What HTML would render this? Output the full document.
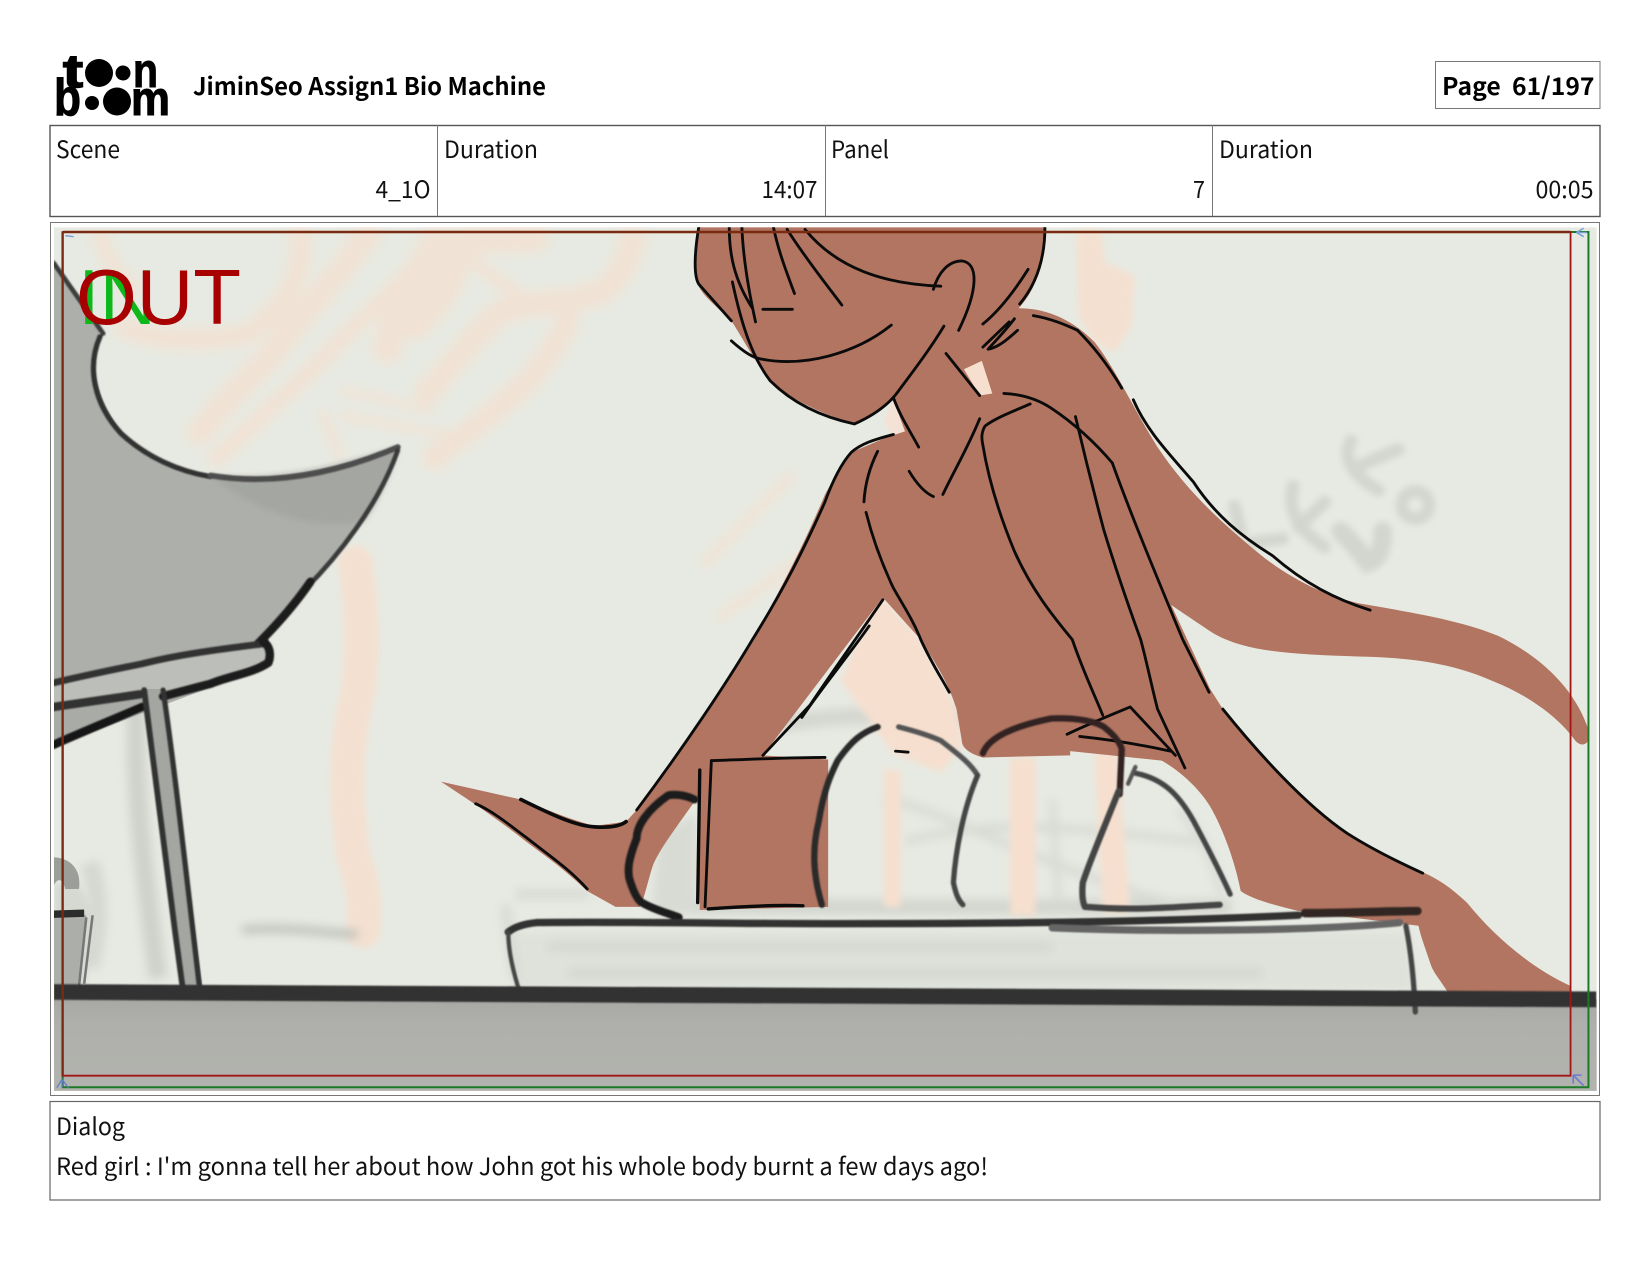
<!DOCTYPE html>
<html><head><meta charset="utf-8"><title>Storyboard page</title>
<style>
html,body{margin:0;padding:0;background:#fff;width:1650px;height:1275px;overflow:hidden}
svg{display:block}
.t{font-family:"Noto Sans CJK JP","Liberation Sans",sans-serif;font-size:24px;fill:#111}
.b{font-weight:700;fill:#000}
.k{fill:none;stroke:#0b0b0b;stroke-width:2.7;stroke-linecap:round;stroke-linejoin:round}
.d{fill:none;stroke-linecap:round;stroke-linejoin:round}
.p{fill:none;stroke:#f6dfcf;stroke-linecap:round;stroke-linejoin:round}
</style></head><body>
<svg width="1650" height="1275" viewBox="0 0 1650 1275" xmlns="http://www.w3.org/2000/svg">
<defs>
<clipPath id="c"><rect x="51.3" y="216" width="1466" height="821"/></clipPath>
<filter id="bl" x="-20%" y="-20%" width="140%" height="140%"><feGaussianBlur stdDeviation="3"/></filter>
<filter id="bl4" x="-20%" y="-20%" width="140%" height="140%"><feGaussianBlur stdDeviation="4.5"/></filter>
<filter id="bl1" x="-10%" y="-10%" width="120%" height="120%"><feGaussianBlur stdDeviation="0.8"/></filter>
<filter id="blf" filterUnits="userSpaceOnUse" x="0" y="900" width="1600" height="100"><feGaussianBlur stdDeviation="0.7"/></filter>
<linearGradient id="fl" x1="0" y1="0" x2="0" y2="1"><stop offset="0" stop-color="#a8a9a5"/><stop offset=".3" stop-color="#afb0ab"/><stop offset="1" stop-color="#b2b3ae"/></linearGradient>
</defs>

<!-- logo -->
<g fill="#000" font-family="'Liberation Sans',sans-serif" font-weight="700">
<text x="63" y="87" font-size="46" textLength="20" lengthAdjust="spacingAndGlyphs" stroke="#000" stroke-width="1.5">t</text>
<circle cx="99" cy="73" r="14"/><circle cx="123" cy="73" r="7.5"/>
<text x="133" y="87" font-size="48" textLength="25" lengthAdjust="spacingAndGlyphs" stroke="#000" stroke-width="1">n</text>
<text x="54" y="115" font-size="52" textLength="27" lengthAdjust="spacingAndGlyphs" stroke="#000" stroke-width="1">b</text>
<circle cx="92" cy="103" r="7"/><circle cx="117" cy="101.5" r="14"/>
<text x="131" y="115" font-size="48" textLength="39" lengthAdjust="spacingAndGlyphs" stroke="#000" stroke-width="1">m</text>
</g>

<text class="t b" x="193" y="95" textLength="353" lengthAdjust="spacingAndGlyphs">JiminSeo Assign1 Bio Machine</text>
<rect x="1435.5" y="61.5" width="164.5" height="47" fill="#fff" stroke="#777" stroke-width="1"/>
<text class="t b" x="1442" y="95" textLength="152.5" lengthAdjust="spacingAndGlyphs" xml:space="preserve">Page&#160;&#160;61/197</text>

<!-- info table -->
<rect x="50" y="125.5" width="1550" height="91" fill="#fff" stroke="#555" stroke-width="1.4"/>
<path d="M437.5 125v91M825.5 125v91M1212.5 125v91" stroke="#777" stroke-width="1" fill="none"/>
<text class="t" x="56" y="158" textLength="64" lengthAdjust="spacingAndGlyphs">Scene</text>
<text class="t" x="375.5" y="198" textLength="55" lengthAdjust="spacingAndGlyphs">4_1O</text>
<text class="t" x="444" y="158" textLength="94" lengthAdjust="spacingAndGlyphs">Duration</text>
<text class="t" x="761.5" y="198" textLength="56" lengthAdjust="spacingAndGlyphs">14:07</text>
<text class="t" x="831" y="158" textLength="58" lengthAdjust="spacingAndGlyphs">Panel</text>
<text class="t" x="1193" y="198" textLength="12" lengthAdjust="spacingAndGlyphs">7</text>
<text class="t" x="1219" y="158" textLength="94" lengthAdjust="spacingAndGlyphs">Duration</text>
<text class="t" x="1535.5" y="198" textLength="58" lengthAdjust="spacingAndGlyphs">00:05</text>

<!-- frame -->
<rect x="50.5" y="222.5" width="1549" height="873" fill="#fff" stroke="#777" stroke-width="1"/>

<g transform="scale(1.0523 1.052)">
<g clip-path="url(#c)">
<rect x="51" y="216" width="1467" height="822" fill="#e7eae2"/>

<!-- peach under-sketch -->
<g filter="url(#bl4)" opacity=".62">
<g class="p">
<path stroke-width="26" d="M190 411C210 385 235 360 260 335C285 300 320 265 349 223"/>
<path stroke-width="18" d="M206 435C240 405 270 375 301 347C330 315 360 290 387 261C398 248 405 235 412 223"/>
<path stroke-width="30" d="M368 331C372 310 378 295 387 278C400 255 415 243 431 233C455 226 480 226 507 226"/>
<path stroke-width="26" d="M406 373C430 345 450 320 475 297C505 285 540 290 570 278C590 265 597 245 602 226"/>
<path stroke-width="24" d="M412 435C445 410 480 385 507 356C520 340 530 325 539 306"/>
<path stroke-width="8" d="M326 371L409 390M326 395L425 413"/>
<path stroke-width="10" d="M307 394L323 432"/>
<path stroke-width="22" d="M120 312C150 325 210 325 238 316C265 295 290 270 285 223"/>
<path stroke-width="16" d="M95 225C102 245 112 262 125 272"/>
<path stroke-width="14" d="M505 290C470 260 440 250 430 225"/>
<path stroke-width="28" d="M435 240C430 270 420 285 395 310"/>
<path stroke-width="10" d="M670 535L750 454M685 586L784 516"/>
</g>
</g>
<g filter="url(#bl)" opacity=".9">
<path class="p" stroke-width="32" d="M338 535C345 590 345 620 340 660C325 720 330 770 335 810C345 840 348 860 345 885"/>
<polygon fill="#f6dfcf" points="1023,218 1045,218 1050,250 1078,262 1075,310 1060,335 1040,325 1025,300"/>
</g>

<!-- table and background greys -->
<g filter="url(#bl4)">
<polygon fill="#dfe2db" points="490,885 1340,885 1345,942 490,942"/>
<path d="M520 900H1000M540 925H1200" stroke="#d4d7d0" stroke-width="9" fill="none"/>
<path d="M620 862H1170" stroke="#d2d5ce" stroke-width="14" fill="none"/>
<polygon fill="#d8dbd4" points="625,790 662,775 662,868 620,868"/>
<path d="M700 700C760 675 900 675 1010 690" stroke="#d4d7d0" stroke-width="16" fill="none"/>
<path d="M490 850L560 850M480 860L490 930" stroke="#d8dbd4" stroke-width="10" fill="none"/>
<path d="M840 760C900 770 1000 830 1120 860M860 800C950 775 1040 790 1140 800" stroke="#d8dbd4" stroke-width="8" fill="none"/>
<path d="M1000 760L1006 860M1120 770C1140 790 1155 820 1160 850" stroke="#d8dbd4" stroke-width="7" fill="none"/>
<path d="M230 884C280 880 310 888 340 888" stroke="#bfc2bb" stroke-width="8" fill="none"/>
<path d="M130 660C125 750 140 850 150 930" stroke="#cfd2cb" stroke-width="18" fill="none"/>
<path d="M85 820C95 850 95 880 85 920" stroke="#d5d8d1" stroke-width="18" fill="none"/>
</g>
<g filter="url(#bl)" fill="#f6dfcf">
<rect x="840" y="732" width="16" height="130"/>
<rect x="960" y="720" width="24" height="150"/>
<polygon points="1040,715 1062,715 1074,868 1048,868"/>
<polygon points="835,565 799,647 849,716 894,734 914,710 909,674 875,608"/>
</g>

<!-- scribble right -->
<g filter="url(#bl)" fill="none" stroke="#d3d6cf" stroke-width="12" stroke-linecap="round">
<path d="M1284 419C1276 432 1282 450 1310 466M1294 442L1329 427"/>
<circle cx="1345" cy="480" r="13"/>
<path d="M1229 462C1224 480 1228 500 1259 520M1259 477L1234 501"/>
<path stroke-width="18" d="M1314 505C1314 525 1308 532 1300 535C1292 525 1285 515 1274 505"/>
<path d="M1173 481L1179 505M1189 516L1219 512"/>
</g>

<!-- chair -->
<path d="M51 250L95 315C85 345 90 375 115 410C140 435 170 448 200 453C260 458 320 445 378 425C360 480 320 530 290 560L255 605L258 625L225 644L135 678L51 710Z" fill="#adafab"/>
<path d="M200 453C260 458 320 445 378 425C370 450 360 475 345 495C300 505 250 490 200 453Z" fill="#a4a6a2" filter="url(#bl)"/>
<path d="M51 645L135 630L250 612L258 622L225 644L135 660L51 668Z" fill="#bcbeb9"/>
<path d="M51 672L133 660L135 672L51 708Z" fill="#a9aba7"/>
<!-- chair leg -->
<polygon points="135,655 156,655 193,943 173,943" fill="#a4a6a2"/>
<g filter="url(#bl1)" class="d">
<path d="M51 250L98 317" stroke="#3d3d3d" stroke-width="4.5"/>
<path d="M95 320C82 350 90 385 115 412C140 435 170 448 200 453" stroke="#333" stroke-width="5"/>
<path d="M200 452C260 462 320 450 378 425" stroke="#4d4d4d" stroke-width="5.5"/>
<path d="M378 428C360 480 320 530 290 560" stroke="#3a3a3a" stroke-width="4.5"/>
<path d="M295 553C280 575 262 595 245 612" stroke="#1c1c1c" stroke-width="8"/>
<path d="M51 649C90 640 110 636 135 631C170 622 210 617 250 612" stroke="#303030" stroke-width="6.5"/>
<path d="M250 610C258 615 257 625 255 630C240 640 220 642 200 650C180 655 170 658 155 662" stroke="#1c1c1c" stroke-width="8"/>
<path d="M51 672L133 660" stroke="#333" stroke-width="8"/>
<path d="M51 708C80 695 105 685 135 672" stroke="#141414" stroke-width="8"/>
<path d="M137 656C146 730 160 840 174 942" stroke="#303030" stroke-width="5.5"/>
<path d="M155 656C166 730 178 840 190 942" stroke="#303030" stroke-width="5"/>
</g>
<!-- small object left -->
<path d="M51 840L75 840L92 872L80 938L51 940Z" fill="#d6d9d2" filter="url(#bl)"/>
<path d="M51 870H82L76 936H51Z" fill="#acaeaa"/>
<path d="M51 815C65 815 78 825 75 845L62 845C60 836 55 833 51 842Z" fill="#9c9e9a"/>
<path d="M51 869L80 868" stroke="#2c2c2c" stroke-width="7"/>
<path d="M88 870L80 935M82 872L75 938" stroke="#777" stroke-width="2.4" fill="none"/>

<!-- floor -->
<rect x="51" y="950" width="1467" height="88" fill="url(#fl)"/>

<!-- figure fill -->
<g fill="#b27561">
<path d="M663 216L994 216C992 250 985 275 968 293C990 293 1015 300 1040 325C1060 350 1075 385 1100 425C1130 470 1165 500 1195 525C1225 550 1265 570 1300 575C1340 582 1390 590 1425 605C1465 625 1497 655 1510 695C1512 708 1503 711 1497 704C1480 680 1450 660 1420 648C1380 630 1340 625 1290 624C1230 622 1180 620 1150 600C1135 590 1120 580 1113 575L1150 655L1162 674C1195 715 1240 765 1280 792C1305 808 1330 820 1354 830C1375 840 1385 850 1394 858C1420 890 1455 920 1492 937L1492 948L1377 945C1368 930 1362 925 1359 915C1354 900 1350 890 1348 880L1234 866C1210 860 1190 855 1179 847C1175 825 1165 795 1154 774C1145 755 1125 735 1104 723L1017 714L1017 718L934 720C920 716 914 710 914 704L909 674C900 645 885 625 875 608L839 568L725 718L787 722L787 862L665 865L664 762L660 762C640 790 625 810 620 824C615 840 612 855 608 862L585 862L558 847C535 825 520 815 500 800C475 780 445 760 419 743L495 760C520 770 545 780 565 785L595 781L605 770C640 725 680 665 715 608C745 555 765 515 784 470C795 450 805 435 809 430L849 413L858 408L847 378C830 395 820 400 812 403C785 395 750 380 730 360C715 340 705 320 695 305C680 290 665 280 661 265Z"/>
</g>
<polygon points="916,351 933,343 943,374 931,376" fill="#f6dfcf"/>
<polygon points="849,380 860,410 848,414 840,400" fill="#f3e2d5"/>

<!-- black line art -->
<g class="k">
<path d="M664 216C660 240 659 262 664 270L695 305"/>
<path d="M696 268C705 310 715 340 732 362C750 380 775 395 812 403C830 395 845 385 855 370C870 350 885 330 897 310"/>
<path d="M695 324C705 333 715 340 722 341C765 350 815 335 847 309"/>
<path d="M693 216C693 240 697 265 715 293M705 216C706 240 710 270 718 306M725 294H753M735 216C740 240 748 260 755 279M748 218C765 245 785 270 800 290M765 218C795 255 840 270 894 272"/>
<path d="M887 275C892 258 902 248 914 248C930 250 930 275 911 314"/>
<path d="M993 216C993 245 985 270 969 289M934 308C950 295 965 275 977 256M964 303C955 315 945 325 939 332C950 330 960 320 967 314M934 330L959 306"/>
<path d="M982 300C1000 303 1015 310 1024 314C1040 330 1055 350 1066 369"/>
<path d="M1077 380C1090 410 1110 430 1134 458C1155 490 1180 510 1209 528C1240 555 1270 570 1302 580"/>
<path d="M899 336L931 376M849 378C855 395 865 410 873 425"/>
<path d="M954 374C975 375 990 382 999 388C1020 402 1040 420 1057 440"/>
<path d="M979 384C960 392 945 398 936 405C932 412 933 418 934 423C940 460 952 495 964 524C980 560 1000 585 1019 608C1030 640 1040 660 1048 680"/>
<path d="M1022 396C1030 430 1040 470 1049 504C1060 540 1072 575 1084 608C1090 630 1095 655 1100 674L1126 730"/>
<path d="M1057 440C1075 490 1100 550 1124 608L1149 658"/>
<path d="M931 398C920 425 908 445 896 470M864 448C870 458 878 468 887 472"/>
<path d="M849 413C830 418 818 422 809 430C800 440 792 455 784 477C765 520 745 560 715 608C690 650 650 710 605 770"/>
<path d="M834 429C826 445 822 460 821 477M823 487C830 515 840 540 849 559C858 575 868 590 875 608C885 630 895 645 902 658"/>
<path d="M839 570C815 605 790 640 770 670L725 718M826 595C805 625 780 655 762 682"/>
<path style="stroke-width:3.5" d="M495 760C520 772 545 785 565 786C580 787 590 785 595 781"/>
<path d="M452 764C470 772 485 785 500 796C520 812 540 825 558 845"/>
<path d="M676 723C710 722 750 720 784 720M676 723L670 862"/>
<path style="stroke-width:3.2" d="M665 732L663 858M673 864C700 862 735 860 763 861"/>
<path d="M1014 698C1035 688 1055 680 1074 672L1117 718M1026 700C1055 703 1085 708 1112 714"/>
<path d="M1162 674C1195 715 1240 765 1280 792C1305 808 1330 820 1352 830"/>
<path d="M851 714L863 715"/>
</g>

<!-- cuff, arches, domes -->
<g filter="url(#bl1)" class="d">
<path stroke="#1f1f1f" stroke-width="7.5" d="M660 760C650 755 640 755 635 756C615 770 605 785 605 797C598 815 596 825 598 835C602 848 606 856 610 858C622 865 635 868 645 872"/>
<path stroke="#2a2a2a" stroke-width="6" d="M781 860C772 830 772 805 778 781C783 750 790 735 796 723C810 703 820 696 834 691"/>
<path stroke="#555" stroke-width="5" d="M854 691C870 695 885 700 894 704C908 715 922 725 929 737"/>
<path stroke="#444" stroke-width="5" d="M929 737C915 770 908 810 906 839C908 848 910 855 915 860"/>
<path stroke="#312420" stroke-width="6" d="M934 716C940 700 965 690 999 683C1020 682 1040 685 1049 691C1058 698 1064 705 1066 712L1064 755"/>
<path stroke="#444" stroke-width="6" d="M1063 752C1048 790 1035 820 1029 839C1028 850 1029 858 1031 862C1080 866 1120 862 1159 860"/>
<path stroke="#444" stroke-width="5" d="M1079 735C1105 740 1120 755 1134 780C1150 810 1160 830 1169 850"/>
<path stroke="#555" stroke-width="4" d="M1079 729L1072 745"/>
<!-- table -->
<path stroke="#333" stroke-width="7" d="M483 886C490 880 500 878 510 877C600 876 700 878 784 878C900 878 1060 878 1234 870"/>
<path stroke="#666" stroke-width="7" d="M1000 882C1100 886 1250 885 1330 877"/>
<path stroke="#322622" stroke-width="8" d="M1240 868C1280 868 1320 866 1347 866"/>
<path stroke="#444" stroke-width="5" d="M1336 880C1342 910 1344 940 1345 962"/>
<path stroke="#444" stroke-width="4" d="M483 886C483 905 488 925 495 947"/>
</g>

<!-- floor line -->
<path d="M51 943C400 945 900 946 1517 950" stroke="#323232" stroke-width="15" fill="none" filter="url(#blf)"/>
</g>

<!-- guides -->
<g fill="none">
<path d="M59.5 220.5H1509.5V1033.5H59.5V220.5" stroke="#1c7a26" stroke-width="1.9"/>
<path d="M59.5 220.5H1492.5V1022.5H59.5Z" stroke="#a51414" stroke-width="1.7"/>
<path d="M60 220.5H1492" stroke="#7a2a10" stroke-width="2.4"/>
<path d="M59.5 220V1022" stroke="#7a2a10" stroke-width="2.2"/>
<path d="M62 224L70 225M1498 221L1505 217M1498 221L1505 225M1498 221H1508" stroke="#7aa0d8" stroke-width="1.4"/>
<path d="M59 1034V1026M59 1026L54 1034M59 1026L65 1034" stroke="#5b80c8" stroke-width="1.2"/>
<path d="M1505 1032L1495 1022M1495 1022H1503M1495 1022V1030" stroke="#6e78d0" stroke-width="1.5"/>
</g>
</g>

<!-- IN / OUT -->
<text x="78" y="324" font-family="'Liberation Sans',sans-serif" font-size="78" fill="#0cb81a" textLength="78" lengthAdjust="spacingAndGlyphs">IN</text>
<text x="76" y="324" font-family="'Liberation Sans',sans-serif" font-size="78" fill="#a80000" textLength="165" lengthAdjust="spacingAndGlyphs">OUT</text>

<!-- dialog -->
<rect x="50" y="1101.5" width="1550" height="98.5" fill="#fff" stroke="#666" stroke-width="1.2"/>
<text class="t" x="56" y="1135" textLength="69" lengthAdjust="spacingAndGlyphs">Dialog</text>
<text class="t" x="56" y="1175" textLength="932" lengthAdjust="spacingAndGlyphs">Red girl : I'm gonna tell her about how John got his whole body burnt a few days ago!</text>
</svg>
</body></html>
